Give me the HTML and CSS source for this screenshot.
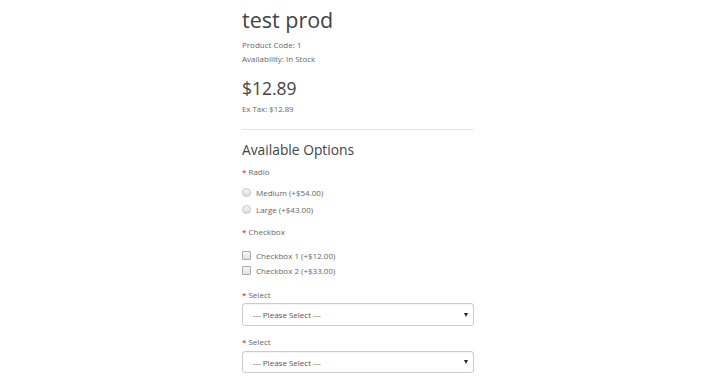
FILE: index.html
```html
<!DOCTYPE html>
<html lang="en">
<head>
<meta charset="utf-8">
<title>test prod</title>
<link rel="stylesheet" href="styles.css">
</head>
<body>
<div class="page">
  <div class="product-info">
    <h1 class="title">test prod</h1>
    <ul class="meta">
      <li>Product Code: 1</li>
      <li>Availability: In Stock</li>
    </ul>
    <h2 class="price">$12.89</h2>
    <p class="tax">Ex Tax: $12.89</p>
    <hr class="divider">
    <h3 class="options-title">Available Options</h3>

    <div class="group group-radio">
      <div class="label"><span class="req">*</span> Radio</div>
      <div class="choices">
        <label class="choice"><span class="radio"></span>Medium (+$54.00)</label>
        <label class="choice"><span class="radio"></span>Large (+$43.00)</label>
      </div>
    </div>

    <div class="group group-check">
      <div class="label"><span class="req">*</span> Checkbox</div>
      <div class="choices">
        <label class="choice"><span class="check"></span>Checkbox 1 (+$12.00)</label>
        <label class="choice"><span class="check"></span>Checkbox 2 (+$33.00)</label>
      </div>
    </div>

    <div class="group group-select">
      <div class="label"><span class="req">*</span> Select</div>
      <div class="select"><span>--- Please Select ---</span><span class="arrow"></span></div>
    </div>

    <div class="group group-select2">
      <div class="label"><span class="req">*</span> Select</div>
      <div class="select"><span>--- Please Select ---</span><span class="arrow"></span></div>
    </div>
  </div>
</div>
</body>
</html>
```
FILE: styles.css
```css
html, body {
  margin: 0;
  padding: 0;
  background: #fff;
}
body {
  font-family: "Open Sans", "Liberation Sans", sans-serif;
  color: #666;
  font-size: 8px;
}
.page {
  width: 710px;
  height: 380px;
  overflow: hidden;
}
.product-info {
  width: 232px;
  margin-left: 242px;
  padding-top: 7px;
}
.title {
  margin: 0;
  font-size: 21.5px;
  font-weight: 400;
  line-height: 26px;
  color: #444;
}
.meta {
  list-style: none;
  margin: 5px 0 0;
  padding: 0;
}
.meta li {
  line-height: 13px;
  height: 13px;
}
.meta li + li {
  margin-top: 0.5px;
}
.price {
  margin: 12px 0 0;
  font-size: 17.5px;
  font-weight: 400;
  line-height: 22px;
  color: #444;
}
.tax {
  margin: 4px 0 0;
  line-height: 13px;
  font-size: 7.8px;
}
.divider {
  margin: 13px 0 0;
  border: 0;
  border-top: 1px solid #e5e5e5;
  height: 0;
}
.options-title {
  margin: 11px 0 0;
  font-size: 13.8px;
  font-weight: 400;
  line-height: 18px;
  color: #444;
}
.group {
  margin-top: 6px;
}
.group-check {
  margin-top: 9.5px;
}
.group-select {
  margin-top: 10.3px;
}
.group-select2 {
  margin-top: 8.5px;
}
.label {
  line-height: 13px;
  height: 13px;
  color: #666;
}
.req {
  color: #f00;
}
.choices {
  display: flex;
  flex-direction: column;
  gap: 3.6px;
  margin-top: 8.7px;
}
.group-check .choices {
  gap: 2.7px;
  margin-top: 10.3px;
}
.choice {
  display: flex;
  align-items: center;
  gap: 5px;
  line-height: 13px;
  height: 13px;
}
.radio {
  width: 7px;
  height: 7px;
  border: 1px solid #c4c4c4;
  border-radius: 50%;
  background: linear-gradient(#f6f6f6, #dedede);
}
.check {
  width: 7px;
  height: 7px;
  border: 1px solid #aaa;
  border-radius: 1px;
  background: linear-gradient(#f6f6f6, #e2e2e2);
}
.select {
  margin-top: 2.5px;
  height: 21px;
  border: 1px solid #ccc;
  border-radius: 3px;
  display: flex;
  align-items: center;
  justify-content: space-between;
  padding: 0 5px 0 10px;
  color: #555;
  box-shadow: inset 0 1px 1px rgba(0,0,0,0.05);
}
.group-select2 .select {
  margin-top: 3.5px;
  height: 20px;
}
.arrow {
  width: 0;
  height: 0;
  border-left: 2.5px solid transparent;
  border-right: 2.5px solid transparent;
  border-top: 4px solid #222;
}
```
